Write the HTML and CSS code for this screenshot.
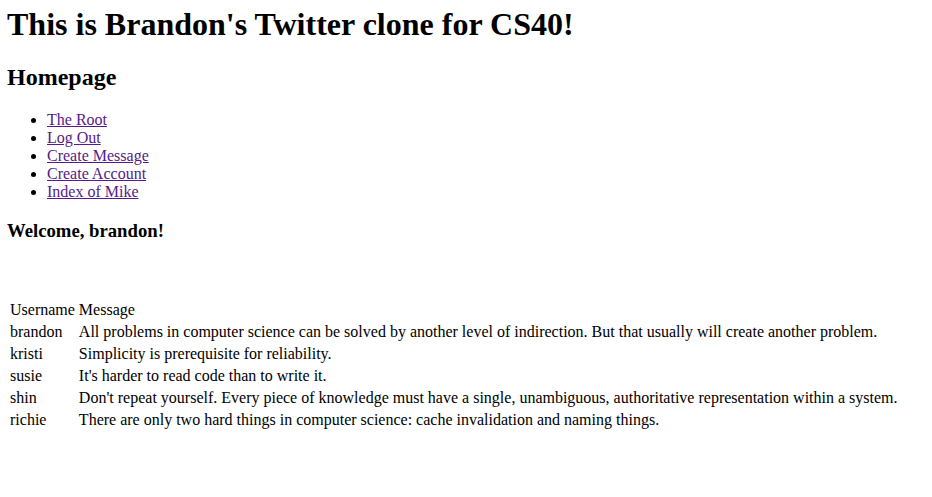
FILE: index.html
```html
<!DOCTYPE html>
<html>
<head>
<meta charset="utf-8">
<title>Brandon's Twitter clone</title>
<link rel="stylesheet" href="styles.css">
</head>
<body class="page">
<h1 class="title">This is Brandon's Twitter clone for CS40!</h1>
<h2 class="subtitle">Homepage</h2>
<ul class="nav">
<li><a href="#">The Root</a></li>
<li><a href="#">Log Out</a></li>
<li><a href="#">Create Message</a></li>
<li><a href="#">Create Account</a></li>
<li><a href="#">Index of Mike</a></li>
</ul>
<h3 class="welcome">Welcome, brandon!</h3>
<br>
<table class="messages">
<tr><td>Username</td><td>Message</td></tr>
<tr><td>brandon</td><td>All problems in computer science can be solved by another level of indirection. But that usually will create another problem.</td></tr>
<tr><td>kristi</td><td>Simplicity is prerequisite for reliability.</td></tr>
<tr><td>susie</td><td>It's harder to read code than to write it.</td></tr>
<tr><td>shin</td><td>Don't repeat yourself. Every piece of knowledge must have a single, unambiguous, authoritative representation within a system.</td></tr>
<tr><td>richie</td><td>There are only two hard things in computer science: cache invalidation and naming things.</td></tr>
</table>
</body>
</html>
```
FILE: styles.css
```css
.page {
  margin: 6px 8px 8px 7px;
  font-family: "Liberation Serif", "Times New Roman", serif;
  font-size: 16px;
  color: #000;
  background: #fff;
}
.title { font-size: 32px; margin: 0 0 21.44px; }
.subtitle { font-size: 24px; margin: 19.92px 0; }
.nav { margin: 16px 0; padding-left: 40px; }
.nav a { color: #551a8b; }
.welcome { font-size: 18.72px; margin: 18.72px 0; }
.messages { border-spacing: 2px; margin-top: 19px; }
.messages td { padding: 1px; }
```
